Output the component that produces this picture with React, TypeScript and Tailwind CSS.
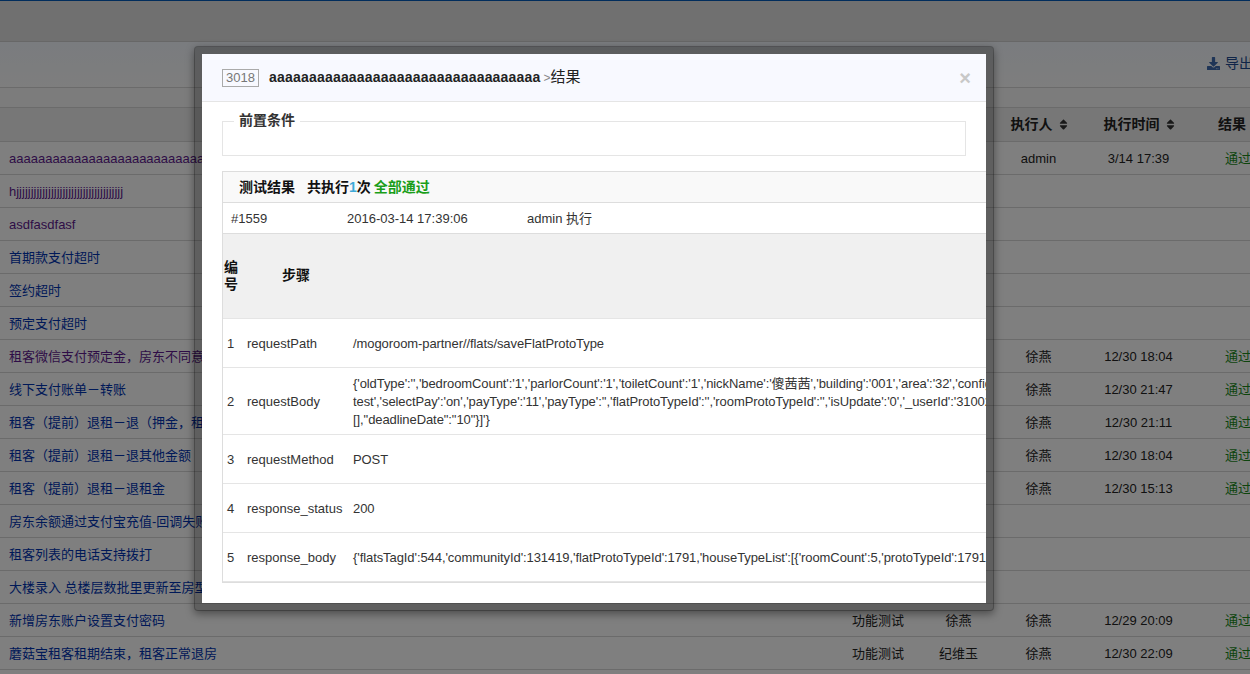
import { FaDownload, FaSort } from "react-icons/fa";

const font = "font-['Liberation_Sans','Noto_Sans_CJK_SC',sans-serif]";

type Row = {
  title: string;
  visited?: boolean;
  type?: string;
  owner?: string;
  runner?: string;
  time?: string;
  result?: string;
};

const rows: Row[] = [
  { title: "aaaaaaaaaaaaaaaaaaaaaaaaaaaaaaaaaa", visited: true, runner: "admin", time: "3/14 17:39", result: "通过" },
  { title: "hjjjjjjjjjjjjjjjjjjjjjjjjjjjjjjjjjjjjj", visited: true },
  { title: "asdfasdfasf", visited: true },
  { title: "首期款支付超时" },
  { title: "签约超时" },
  { title: "预定支付超时" },
  { title: "租客微信支付预定金，房东不同意退款", visited: true, runner: "徐燕", time: "12/30 18:04", result: "通过" },
  { title: "线下支付账单－转账", runner: "徐燕", time: "12/30 21:47", result: "通过" },
  { title: "租客（提前）退租－退（押金，租金）", runner: "徐燕", time: "12/30 21:11", result: "通过" },
  { title: "租客（提前）退租－退其他金额", runner: "徐燕", time: "12/30 18:04", result: "通过" },
  { title: "租客（提前）退租－退租金", runner: "徐燕", time: "12/30 15:13", result: "通过" },
  { title: "房东余额通过支付宝充值-回调失败" },
  { title: "租客列表的电话支持拨打" },
  { title: "大楼录入 总楼层数批里更新至房型" },
  { title: "新增房东账户设置支付密码", type: "功能测试", owner: "徐燕", runner: "徐燕", time: "12/29 20:09", result: "通过" },
  { title: "蘑菇宝租客租期结束，租客正常退房", type: "功能测试", owner: "纪维玉", runner: "徐燕", time: "12/30 22:09", result: "通过" },
];

const steps = [
  { no: 1, name: "requestPath", lines: ["/mogoroom-partner//flats/saveFlatProtoType"], h: "h-[49px]" },
  {
    no: 2,
    name: "requestBody",
    lines: [
      "{'oldType':'','bedroomCount':'1','parlorCount':'1','toiletCount':'1','nickName':'傻茜茜','building':'001','area':'32','configList",
      "test','selectPay':'on','payType':'11','payType':'','flatProtoTypeId':'','roomProtoTypeId':'','isUpdate':'0','_userId':'31002'",
      "[],\"deadlineDate\":\"10\"}]'}",
    ],
    h: "h-[67px]",
  },
  { no: 3, name: "requestMethod", lines: ["POST"], h: "h-[49px]" },
  { no: 4, name: "response_status", lines: ["200"], h: "h-[49px]" },
  {
    no: 5,
    name: "response_body",
    lines: ["{'flatsTagId':544,'communityId':131419,'flatProtoTypeId':1791,'houseTypeList':[{'roomCount':5,'protoTypeId':1791,"],
    h: "h-[49px]",
  },
];

function SortHead({ label }: { label: string }) {
  return (
    <span className="inline-flex items-center gap-[6px]">
      {label}
      <FaSort className="h-[13px] w-[9px] text-[#333]" />
    </span>
  );
}

export default function App() {
  return (
    <div className={`relative h-[674px] w-[1250px] overflow-hidden bg-white text-[13px] text-[#222] ${font}`}>
      {/* 顶部导航 */}
      <div className="h-[42px] border-t border-b border-t-[#025ab8] border-b-[#cfcfcf] bg-[#e0e0e0]" />

      {/* 工具栏 */}
      <div className="flex h-[46px] items-center justify-end border-b border-[#d6d6d6] bg-gradient-to-b from-[#f4f8fe] to-[#fcfcfc]">
        <div className="flex w-[43px] shrink-0 items-center gap-[5px] overflow-hidden whitespace-nowrap pb-[2px] text-[14px] text-[#204a90]">
          <FaDownload className="h-[13px] w-[13px] shrink-0 text-[#3e6aae]" />
          导出
        </div>
      </div>
      <div className="h-[20px] border-b border-[#d6d6d6] bg-[#f8f8f8]" />

      {/* 用例列表 */}
      <table className="w-[1278px] table-fixed border-collapse">
        <colgroup>
          <col className="w-[840px]" />
          <col className="w-[76px]" />
          <col className="w-[84px]" />
          <col className="w-[76px]" />
          <col className="w-[124px]" />
          <col className="w-[78px]" />
        </colgroup>
        <thead>
          <tr className="h-[33px] border-b border-[#d6d6d6] bg-[#eeeeee] text-[14px] font-bold">
            <th />
            <th />
            <th />
            <th className="pl-[2px] text-center font-bold">
              <SortHead label="执行人" />
            </th>
            <th className="pl-[2px] text-center font-bold">
              <SortHead label="执行时间" />
            </th>
            <th className="pl-[18px] text-left font-bold">结果</th>
          </tr>
        </thead>
        <tbody>
          {rows.map((r) => (
            <tr key={r.title} className="h-[33px] border-b border-[#d6d6d6] [&>td]:pt-[2px]">
              <td className={`overflow-hidden whitespace-nowrap pl-[9px] ${r.visited ? "text-[#5e1a8e]" : "text-[#0033b0]"}`}>{r.title}</td>
              <td className="text-center">{r.type}</td>
              <td className="pl-[1px] text-center">{r.owner}</td>
              <td className="pl-[1px] text-center">{r.runner}</td>
              <td className="pl-[1px] text-center">{r.time}</td>
              <td className="pl-[25px] text-left text-[#1a8a1a]">{r.result}</td>
            </tr>
          ))}
        </tbody>
      </table>

      {/* 遮罩 */}
      <div className="absolute inset-0 bg-black/50" />

      {/* 结果弹窗 */}
      <div className="absolute left-[194px] top-[46px] h-[565px] w-[800px] overflow-hidden rounded-[4px] border-[8px] border-black/25 bg-white bg-clip-padding shadow-[0_3px_9px_rgba(0,0,0,0.4)]">
        <div className="flex h-[48px] items-center border-b border-[#e5e5e5] bg-[#f8f9ff] pl-[20px] pr-[15px]">
          <span className="mr-[10px] flex h-[18px] w-[37px] items-center justify-center border border-[#aaa] text-[13px] text-[#777]">3018</span>
          <span className="text-[14px] font-bold tracking-[0.2px] text-[#222]">aaaaaaaaaaaaaaaaaaaaaaaaaaaaaaaaaa</span>
          <span className="ml-[3px] text-[12px] text-[#888]">&gt;</span>
          <span className="text-[15px] text-[#222]">结果</span>
          <span className="ml-auto text-[20px] font-bold leading-none text-[#c8c8c8]">×</span>
        </div>

        <div className="px-[20px] pt-[10px]">
          <fieldset className="h-[44px] w-[744px] border border-[#e5e5e5]">
            <legend className="ml-[11px] px-[5px] pb-[2px] text-[14px] font-bold leading-[17px] text-[#333]">前置条件</legend>
          </fieldset>

          <div className="mt-[15px] w-[1100px] border border-[#ddd]">
            <div className="flex h-[31px] items-center border-b border-[#ddd] bg-[#f9f9f9] pl-[16px] text-[14px] font-bold text-[#111]">
              <span className="w-[68px]">测试结果</span>
              <span>
                共执行<span className="text-[#3fa9d8]">1</span>次
              </span>
              <span className="ml-[3px] text-[#1a9e1a]">全部通过</span>
            </div>
            <div className="flex h-[31px] items-center border-b border-[#ddd] pl-[8px] pt-[2px] text-[#333]">
              <span className="w-[116px]">#1559</span>
              <span className="w-[180px]">2016-03-14 17:39:06</span>
              <span>admin 执行</span>
            </div>
            <table className="w-full table-fixed border-collapse">
              <colgroup>
                <col className="w-[20px]" />
                <col className="w-[106px]" />
                <col />
              </colgroup>
              <thead>
                <tr className="h-[84px] border-b border-[#e5e5e5] bg-[#f0f0f0] text-[14px] text-[#111]">
                  <th className="pl-[1px] text-left font-bold leading-[17px]">编号</th>
                  <th className="font-bold">步骤</th>
                  <th />
                </tr>
              </thead>
              <tbody>
                {steps.map((s) => (
                  <tr key={s.no} className={`${s.h} border-b border-[#e5e5e5] text-[#333] [&>td]:pt-[2px]`}>
                    <td className="pl-[4px]">{s.no}</td>
                    <td className="pl-[4px]">{s.name}</td>
                    <td className="overflow-hidden whitespace-nowrap pl-[4px] leading-[18px] tracking-[-0.08px]">
                      {s.lines.map((l) => (
                        <div key={l}>{l}</div>
                      ))}
                    </td>
                  </tr>
                ))}
              </tbody>
            </table>
          </div>
        </div>
      </div>
    </div>
  );
}
